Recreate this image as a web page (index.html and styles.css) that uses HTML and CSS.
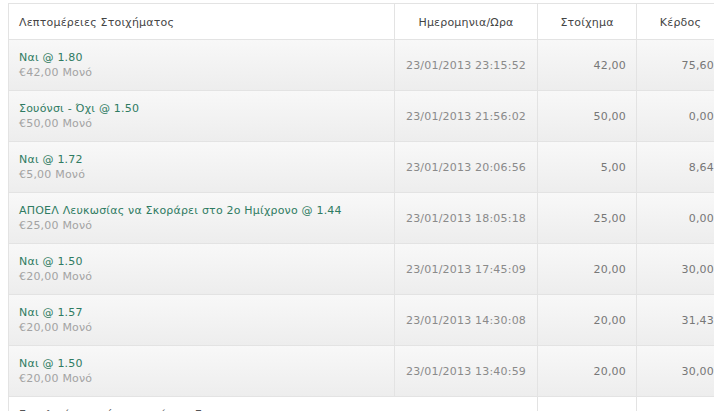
FILE: index.html
```html
<!DOCTYPE html>
<html lang="el">
<head>
    <meta charset="UTF-8">
    <meta name="viewport" content="width=device-width, initial-scale=1.0">
    <title>Ιστορικό Στοιχημάτων</title>
    <link rel="stylesheet" href="styles.css">
</head>
<body>
    <div class="bets-wrap">
        <table class="bets">
            <colgroup>
                <col class="col-details">
                <col class="col-date">
                <col class="col-stake">
                <col class="col-win">
            </colgroup>
            <thead>
                <tr>
                    <th class="left">Λεπτομέρειες Στοιχήματος</th>
                    <th>Ημερομηνια/Ωρα</th>
                    <th>Στοίχημα</th>
                    <th>Κέρδος</th>
                </tr>
            </thead>
            <tbody>
                <tr>
                    <td class="details"><span class="pick">Ναι @ 1.80</span><span class="kind">€42,00 Μονό</span></td>
                    <td class="date">23/01/2013 23:15:52</td>
                    <td class="num">42,00</td>
                    <td class="num">75,60</td>
                </tr>
                <tr>
                    <td class="details"><span class="pick">Σουόνσι - Όχι @ 1.50</span><span class="kind">€50,00 Μονό</span></td>
                    <td class="date">23/01/2013 21:56:02</td>
                    <td class="num">50,00</td>
                    <td class="num">0,00</td>
                </tr>
                <tr>
                    <td class="details"><span class="pick">Ναι @ 1.72</span><span class="kind">€5,00 Μονό</span></td>
                    <td class="date">23/01/2013 20:06:56</td>
                    <td class="num">5,00</td>
                    <td class="num">8,64</td>
                </tr>
                <tr>
                    <td class="details"><span class="pick">ΑΠΟΕΛ Λευκωσίας να Σκοράρει στο 2ο Ημίχρονο @ 1.44</span><span class="kind">€25,00 Μονό</span></td>
                    <td class="date">23/01/2013 18:05:18</td>
                    <td class="num">25,00</td>
                    <td class="num">0,00</td>
                </tr>
                <tr>
                    <td class="details"><span class="pick">Ναι @ 1.50</span><span class="kind">€20,00 Μονό</span></td>
                    <td class="date">23/01/2013 17:45:09</td>
                    <td class="num">20,00</td>
                    <td class="num">30,00</td>
                </tr>
                <tr>
                    <td class="details"><span class="pick">Ναι @ 1.57</span><span class="kind">€20,00 Μονό</span></td>
                    <td class="date">23/01/2013 14:30:08</td>
                    <td class="num">20,00</td>
                    <td class="num">31,43</td>
                </tr>
                <tr>
                    <td class="details"><span class="pick">Ναι @ 1.50</span><span class="kind">€20,00 Μονό</span></td>
                    <td class="date">23/01/2013 13:40:59</td>
                    <td class="num">20,00</td>
                    <td class="num">30,00</td>
                </tr>
                <tr class="total">
                    <td colspan="2" class="details">Συνολικά στοιχήματα ημέρας: 7</td>
                    <td class="num"></td>
                    <td class="num"></td>
                </tr>
            </tbody>
        </table>
    </div>
</body>
</html>
```

FILE: styles.css
```css
/* Reset */
* {
    margin: 0;
    padding: 0;
    box-sizing: border-box;
}

html, body {
    overflow: hidden;
}

body {
    font-family: "DejaVu Sans", Verdana, sans-serif;
    font-size: 11px;
    color: #555;
    background: #fff;
    padding: 3px 0 0 8px;
}

/* Bets table */
.bets-wrap {
    width: 716px;
}

.bets {
    width: 716px;
    table-layout: fixed;
    border-collapse: collapse;
    letter-spacing: 0.2px;
}

.col-details { width: 386px; }
.col-date    { width: 143px; }
.col-stake   { width: 99px; }
.col-win     { width: 88px; }

.bets th,
.bets td {
    border: 1px solid #e3e3e3;
    vertical-align: middle;
    white-space: nowrap;
}

.bets th {
    height: 36px;
    font-weight: normal;
    font-size: 11px;
    color: #444;
    text-align: center;
    background: #fff;
    padding-top: 1px;
}

.bets th.left {
    text-align: left;
    padding-left: 10px;
}

.bets tbody tr {
    height: 51px;
    background: linear-gradient(#f8f8f8, #ededed);
}

.bets tbody tr.total {
    background: #fff;
}

.details {
    padding-left: 10px;
}

.pick {
    display: block;
    color: #2f7b62;
    line-height: 15px;
}

.kind {
    display: block;
    color: #a3a3a3;
    line-height: 15px;
}

.date {
    text-align: center;
    color: #8a8a8a;
}

.num {
    text-align: right;
    padding-right: 10px;
    color: #777;
}

.total td {
    vertical-align: top;
    padding-top: 11px;
    color: #555;
}
```
